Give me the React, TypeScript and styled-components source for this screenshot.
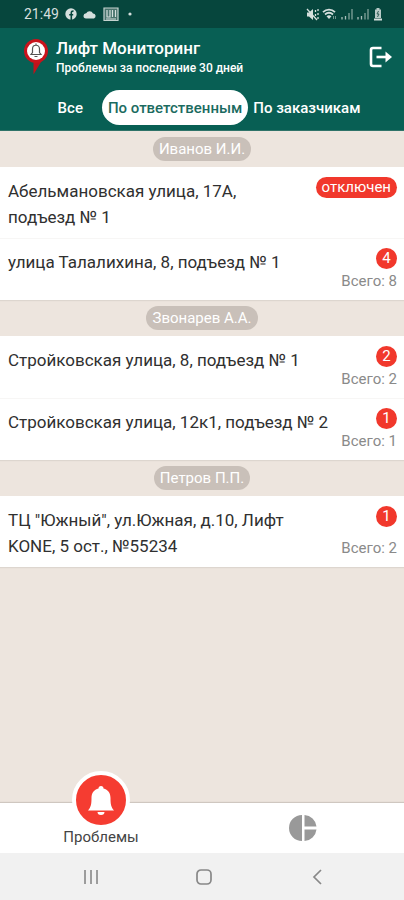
import React from "react";
import styled, { createGlobalStyle, css } from "styled-components";

const GlobalStyle = createGlobalStyle`
  * { box-sizing: border-box; }
  body { margin: 0; font-family: Roboto, "Liberation Sans", sans-serif; background: #ede5de; }
  button { font: inherit; border: 0; padding: 0; background: none; cursor: pointer; }
`;

const Screen = styled.div`
  display: flex;
  flex-direction: column;
  min-height: 100vh;
`;

const StatusBar = styled.div`
  display: flex;
  align-items: center;
  justify-content: space-between;
  height: 28px;
  padding: 0 21px 0 24px;
  background: #06463d;
  color: #d5dfdd;
  font-size: 14px;
`;

const StatusGroup = styled.div<{ $gap: number }>`
  display: flex;
  align-items: center;
  gap: ${(p) => p.$gap}px;
`;

const Header = styled.header`
  background: #085f54;
  color: #fff;
  padding: 7px 0 5px;
  border-bottom: 1px solid #2f7369;
`;

const Brand = styled.div`
  display: flex;
  align-items: center;
  height: 43px;
  padding: 0 11px 0 22px;
`;

const Titles = styled.div`
  flex: 1;
  margin-left: 6px;
`;

const Title = styled.h1`
  margin: 0;
  font-size: 17px;
  line-height: 22px;
  font-weight: 500;
`;

const Subtitle = styled.p`
  margin: 0;
  font-size: 12px;
  line-height: 18px;
  font-weight: 500;
`;

const IconButton = styled.button`
  display: flex;
  color: #fff;
`;

const Tabs = styled.nav`
  display: flex;
  justify-content: center;
  align-items: center;
  gap: 5px;
  margin-top: 12px;
  padding-left: 14px;
`;

const Tab = styled.button<{ $active?: boolean }>`
  height: 35px;
  border-radius: 18px;
  font-size: 15px;
  font-weight: 500;
  color: #fff;
  white-space: nowrap;
  ${(p) =>
    p.$active &&
    css`
      padding: 0 6px;
      background: #fff;
      color: #1b6b60;
    `}
  &:first-child { margin-right: 14px; }
`;

const List = styled.main`
  flex: 1;
`;

const GroupHeader = styled.h2`
  display: flex;
  align-items: center;
  justify-content: center;
  height: 36px;
  margin: 0;
`;

const GroupName = styled.span`
  padding: 0 6px;
  border-radius: 12px;
  background: #c9c0b9;
  color: #fff;
  font-size: 15px;
  line-height: 24px;
  font-weight: 400;
`;

const Rows = styled.ul`
  margin: 0;
  padding: 0;
  list-style: none;
  background: #fff;
  box-shadow: 0 1px 1px #ddd6cf;
`;

const Row = styled.li`
  display: flex;
  justify-content: space-between;
  gap: 12px;
  padding: 10px 7px 7px 8px;
  & + & { box-shadow: inset 0 1px #f7f6f5; }
`;

const Address = styled.div`
  padding: 1px 0;
  color: #303030;
  font-size: 17px;
  line-height: 26px;
`;

const Side = styled.div`
  display: flex;
  flex-direction: column;
  justify-content: space-between;
  align-items: flex-end;
  flex-shrink: 0;
`;

const Badge = styled.span`
  min-width: 21px;
  padding: 0 6px;
  border-radius: 11px;
  background: #f1382c;
  color: #fff;
  font-size: 15px;
  line-height: 21px;
  text-align: center;
`;

const Total = styled.span`
  color: #8a8a8a;
  font-size: 15px;
  line-height: 24px;
`;

const BottomNav = styled.nav`
  display: grid;
  grid-template-columns: 1fr 1fr;
  grid-template-rows: 50px;
  background: #fff;
  box-shadow: 0 -1px 1px #cfc7c0;
`;

const NavItem = styled.button<{ $raised?: boolean }>`
  display: flex;
  flex-direction: column;
  align-items: center;
  justify-content: ${(p) => (p.$raised ? "flex-end" : "center")};
  min-height: 0;
  color: #444;
  font-size: 15px;
  line-height: 20px;
  padding-bottom: ${(p) => (p.$raised ? 6 : 0)}px;
`;

const RaisedIcon = styled.span`
  display: flex;
  align-items: center;
  justify-content: center;
  flex-shrink: 0;
  width: 58px;
  height: 58px;
  margin-bottom: -2px;
  border: 4px solid #fff;
  border-radius: 50%;
  background: #f53c31;
`;

const SystemNav = styled.div`
  display: grid;
  grid-template-columns: repeat(3, 1fr);
  width: 85%;
  margin: 0 auto;
  height: 47px;
`;

const SystemBar = styled.footer`
  padding-left: 4px;
  background: #f1f1f1;
`;

const SystemButton = styled.button`
  display: flex;
  align-items: center;
  justify-content: center;
`;

const groups = [
  {
    name: "Иванов И.И.",
    rows: [
      { address: "Абельмановская улица, 17А, подъезд № 1", badge: "отключен", total: null },
      { address: "улица Талалихина, 8, подъезд № 1", badge: "4", total: 8 },
    ],
  },
  {
    name: "Звонарев А.А.",
    rows: [
      { address: "Стройковская улица, 8, подъезд № 1", badge: "2", total: 2 },
      { address: "Стройковская улица, 12к1, подъезд № 2", badge: "1", total: 1 },
    ],
  },
  {
    name: "Петров П.П.",
    rows: [
      { address: 'ТЦ "Южный", ул.Южная, д.10, Лифт KONE, 5 ост., №55234', badge: "1", total: 2 },
    ],
  },
];

const LogoPin = () => (
  <svg width="28" height="40" viewBox="0 0 28 40">
    <path d="M22 20 11.500 37.500V22Z" fill="#c1121b" />
    <circle cx="14" cy="14" r="12" fill="#c9131c" />
    <circle cx="14" cy="14" r="9" fill="#fff" />
    <path d="M9 17.500h10l-1.500-2v-3.500c0-5-7-5-7 0v3.500Z M14 8V6.500M12.500 19.500h3" fill="none" stroke="#555" strokeWidth="1.200" />
  </svg>
);

const StatusLeftIcons = () => (
  <>
    <svg width="12" height="12" viewBox="0 0 12 12">
      <circle cx="6" cy="6" r="5.700" fill="#d5dfdd" />
      <path d="M6.300 12V5c0-1.500.7-2 2.200-1.900M4.200 6.800h4" fill="none" stroke="#06463d" strokeWidth="1.600" />
    </svg>
    <svg width="14" height="9" viewBox="0 0 14 9">
      <path d="M3 8.500a2.600 2.600 0 0 1 .2-5.200A3.800 3.800 0 0 1 10 3.500a2.600 2.600 0 0 1 1 5Z" fill="#d5dfdd" />
    </svg>
    <svg width="16" height="15" viewBox="0 0 16 15">
      <path d="M1 1h14v12.500H1Z" fill="#48736c" stroke="#c5d3d0" strokeWidth="1.200" />
      <path d="M4 3v7h3V3M9.500 3v7M12.500 3v7M3 12h10" fill="none" stroke="#d5dfdd" strokeWidth="1.200" />
    </svg>
    <svg width="12" height="4" viewBox="0 0 12 4"><circle cx="5" cy="2" r="1.600" fill="#d5dfdd" /></svg>
  </>
);

const Signal = () => (
  <svg width="13" height="12" viewBox="0 0 13 12">
    <path d="M1 9v2.500M4.500 8v3.500" stroke="#a9bfbb" strokeWidth="1.300" />
    <path d="M8 5v6.500M11 1v10.500" stroke="#5f8981" strokeWidth="1.800" />
  </svg>
);

const StatusRightIcons = () => (
  <>
    <svg width="13" height="13" viewBox="0 0 13 13">
      <path d="M1 4.500h2L7 1v11L3 8.500H1Z" fill="#d5dfdd" />
      <path d="M1 1l10 11M9.500 2v2M9.500 6v2M12 1v2M12 5v2M12 9v2" stroke="#d5dfdd" strokeWidth="1.300" />
    </svg>
    <svg width="16" height="12" viewBox="0 0 16 12">
      <path d="M1 4.200c3.500-3.500 8.500-3.500 12 0M3 6.500c2.500-2.200 5.500-2.200 8 0" fill="none" stroke="#d5dfdd" strokeWidth="1.800" />
      <path d="M4.500 8.200Q7 6.500 9.500 8.200L7 11Z" fill="#d5dfdd" />
      <path d="M11.500 8v3M13.500 8v3" stroke="#719690" />
    </svg>
    <Signal />
    <Signal />
    <svg width="10" height="13" viewBox="0 0 10 13">
      <path d="M3.500 0h3v1.500H8V10H2V1.500h1.500Z" fill="#b8cac7" />
      <path d="M5.500 3 4 6h2L4.500 9" fill="none" stroke="#315e57" />
      <path d="M1 11.500h8" stroke="#d5dfdd" strokeWidth="2" />
    </svg>
  </>
);

const LogoutIcon = () => (
  <svg width="24" height="22" viewBox="0 0 24 22" fill="none" stroke="currentColor" strokeWidth="2.600">
    <path d="M12.500 2H4Q2 2 2 4v14q0 2 2 2h8.500" />
    <path d="M7.500 11H20" />
    <path d="M16.500 5.500 23 11l-6.500 5.500Z" fill="currentColor" stroke="none" />
  </svg>
);

const BellIcon = () => (
  <svg width="28" height="32" viewBox="0 0 28 32" fill="#fff">
    <path d="M11.500 4.500a2.500 2.500 0 0 1 5 0C21 5.500 23.500 9 23.500 14c0 6 .5 9 3.500 12.500H1C4 23 4.500 20 4.500 14c0-5 2.500-8.500 7-9.500Z" />
    <path d="M10.500 28h7a3.500 3 0 0 1-7 0Z" />
  </svg>
);

const ChartIcon = () => (
  <svg width="28" height="28" viewBox="0 0 28 28" fill="#999">
    <path d="M13 1v26a13 13 0 0 1 0-26ZM15.500 1A13 13 0 0 1 27.500 12.500h-12ZM15.500 15.500h12A13 13 0 0 1 15.500 27Z" />
  </svg>
);

export default function App() {
  return (
    <Screen>
      <GlobalStyle />
      <StatusBar>
        <StatusGroup $gap={6}>
          <span>21:49</span>
          <StatusLeftIcons />
        </StatusGroup>
        <StatusGroup $gap={3}>
          <StatusRightIcons />
        </StatusGroup>
      </StatusBar>
      <Header>
        <Brand>
          <LogoPin />
          <Titles>
            <Title>Лифт Мониторинг</Title>
            <Subtitle>Проблемы за последние 30 дней</Subtitle>
          </Titles>
          <IconButton aria-label="Выйти"><LogoutIcon /></IconButton>
        </Brand>
        <Tabs>
          <Tab>Все</Tab>
          <Tab $active>По ответственным</Tab>
          <Tab>По заказчикам</Tab>
        </Tabs>
      </Header>
      <List>
        {groups.map((group) => (
          <section key={group.name}>
            <GroupHeader><GroupName>{group.name}</GroupName></GroupHeader>
            <Rows>
              {group.rows.map((row) => (
                <Row key={row.address}>
                  <Address>{row.address}</Address>
                  <Side>
                    <Badge>{row.badge}</Badge>
                    {row.total !== null && <Total>Всего: {row.total}</Total>}
                  </Side>
                </Row>
              ))}
            </Rows>
          </section>
        ))}
      </List>
      <BottomNav>
        <NavItem $raised>
          <RaisedIcon><BellIcon /></RaisedIcon>
          Проблемы
        </NavItem>
        <NavItem aria-label="Статистика"><ChartIcon /></NavItem>
      </BottomNav>
      <SystemBar>
        <SystemNav>
          <SystemButton aria-label="Недавние">
            <svg width="16" height="16" viewBox="0 0 16 16"><path d="M2 1v14M8 1v14M14 1v14" stroke="#888" strokeWidth="1.600" /></svg>
          </SystemButton>
          <SystemButton aria-label="Домой">
            <svg width="18" height="18" viewBox="0 0 18 18"><rect x="2" y="2" width="14" height="14" rx="4" fill="none" stroke="#888" strokeWidth="1.700" /></svg>
          </SystemButton>
          <SystemButton aria-label="Назад">
            <svg width="12" height="16" viewBox="0 0 12 16"><path d="M10 1 3 8l7 7" fill="none" stroke="#888" strokeWidth="1.700" /></svg>
          </SystemButton>
        </SystemNav>
      </SystemBar>
    </Screen>
  );
}
